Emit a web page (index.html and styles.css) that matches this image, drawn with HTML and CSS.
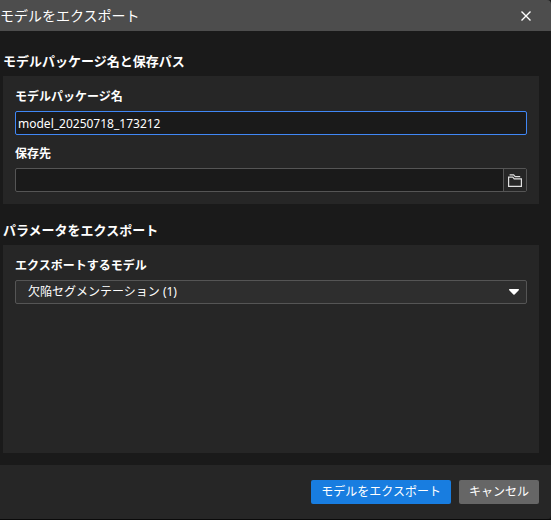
FILE: index.html
```html
<!DOCTYPE html>
<html lang="ja">
<head>
    <meta charset="UTF-8">
    <meta name="viewport" content="width=device-width, initial-scale=1.0">
    <title>モデルをエクスポート</title>
    <link rel="stylesheet" href="styles.css">
</head>
<body>
    <form class="dialog">
        <header class="titlebar">
            <h1>モデルをエクスポート</h1>
            <button type="button" class="close-btn" aria-label="閉じる">
                <svg width="10" height="10" viewBox="0 0 10 10"><path d="M0.5 0.5L9.5 9.5M9.5 0.5L0.5 9.5" stroke="#fff" stroke-width="1.4" fill="none"/></svg>
            </button>
        </header>

        <main class="content">
            <section>
                <h2>モデルパッケージ名と保存パス</h2>
                <div class="panel">
                    <div class="field">
                        <label for="package-name">モデルパッケージ名</label>
                        <input type="text" id="package-name" class="control active" value="model_20250718_173212">
                    </div>
                    <div class="field">
                        <label for="save-path">保存先</label>
                        <div class="control path">
                            <input type="text" id="save-path">
                            <button type="button" class="browse-btn" aria-label="参照">
                                <svg width="14" height="13" viewBox="0 0 14 13" fill="none" stroke="#e0e0e0">
                                    <path d="M0.6 12.4V3.2H4.8L6.2 4.8H13.4V12.4Z" stroke-width="1.2"/>
                                    <path d="M1.6 0.9H5.6L7.2 2.6H12.2" stroke-width="1.2"/>
                                </svg>
                            </button>
                        </div>
                    </div>
                </div>
            </section>

            <section class="grow">
                <h2>パラメータをエクスポート</h2>
                <div class="panel">
                    <div class="field">
                        <label for="model">エクスポートするモデル</label>
                        <div class="select-wrap">
                            <select id="model" class="control">
                                <option>欠陥セグメンテーション (1)</option>
                            </select>
                            <svg class="arrow" width="10" height="6" viewBox="0 0 10 6"><path d="M0.3 0H9.7Q10.2 0.8 9.5 1.4L5.6 5.4Q5 6 4.4 5.4L0.5 1.4Q-0.2 0.8 0.3 0Z" fill="#fff"/></svg>
                        </div>
                    </div>
                </div>
            </section>
        </main>

        <footer class="actions">
            <button type="submit" class="btn primary">モデルをエクスポート</button>
            <button type="button" class="btn">キャンセル</button>
        </footer>
    </form>
</body>
</html>
```
FILE: styles.css
```css
:root {
    --bg: #1a1a1a;
    --panel: #262626;
    --titlebar: #4d4d4d;
    --border: #555;
    --focus: #4087f5;
    --primary: #187de0;
    --button: #666;
}

* {
    margin: 0;
    padding: 0;
    box-sizing: border-box;
}

body {
    background-color: #0a0a0a;
    color: #fff;
    font-family: "Noto Sans", "Noto Sans CJK JP", sans-serif;
    font-size: 12px;
    line-height: 20px;
}

input,
select,
button {
    font: inherit;
    color: inherit;
    border: none;
    background: none;
    outline: none;
}

.dialog {
    display: flex;
    flex-direction: column;
    min-height: 100vh;
    background-color: var(--bg);
    border-bottom: 1px solid #0a0a0a;
}

.titlebar {
    display: flex;
    align-items: center;
    justify-content: space-between;
    height: 31px;
    padding-right: 12px;
    background-color: var(--titlebar);
    border-top-right-radius: 4px;
}

h1 {
    font-size: 14px;
    font-weight: 400;
}

.close-btn {
    display: flex;
    align-items: center;
    justify-content: center;
    width: 26px;
    height: 24px;
}

.content {
    flex: 1;
    display: flex;
    flex-direction: column;
    gap: 11px;
    padding: 15px 12px 12px 3px;
}

.grow {
    flex: 1;
    display: flex;
    flex-direction: column;
}

.grow .panel {
    flex: 1;
}

h2 {
    font-size: 13px;
    font-weight: 700;
    line-height: 30px;
}

.panel {
    display: flex;
    flex-direction: column;
    gap: 9px;
    padding: 11px 12px 12px;
    background-color: var(--panel);
}

.field {
    display: flex;
    flex-direction: column;
    gap: 4px;
}

label {
    font-weight: 700;
}

.control {
    width: 100%;
    height: 24px;
    border: 1px solid var(--border);
    border-radius: 2px;
    background-color: var(--bg);
}

input.control {
    padding: 0 2px;
}

.control.active {
    border-color: var(--focus);
}

.path {
    display: flex;
}

.path input {
    flex: 1;
    min-width: 0;
    padding: 0 2px;
}

.browse-btn {
    display: flex;
    align-items: center;
    justify-content: center;
    width: 23px;
    border-left: 1px solid var(--border);
    background-color: var(--panel);
}

.select-wrap {
    position: relative;
}

select.control {
    display: block;
    appearance: none;
    padding: 0 28px 0 12px;
    background-color: #2e2e2e;
}

.arrow {
    position: absolute;
    top: 9px;
    right: 8px;
    pointer-events: none;
}

.actions {
    display: flex;
    justify-content: flex-end;
    gap: 8px;
    padding: 15px 12px;
    background-color: var(--panel);
    border-bottom-right-radius: 4px;
}

.btn {
    height: 24px;
    padding: 0 10px;
    border-radius: 2px;
    background-color: var(--button);
}

.btn.primary {
    background-color: var(--primary);
}
```
